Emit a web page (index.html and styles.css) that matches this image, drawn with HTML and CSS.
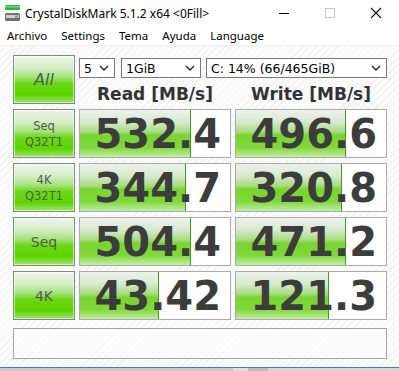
FILE: index.html
```html
<!DOCTYPE html>
<html lang="es">
<head>
  <meta charset="UTF-8" />
  <title>CrystalDiskMark 5.1.2 x64 &lt;0Fill&gt;</title>
  <link rel="stylesheet" href="styles.css">
</head>
<body>

  <div class="window">
    <div class="titlebar">
      <svg class="app-icon" width="16" height="17" viewBox="0 0 16 17">
        <rect x="0" y="0" width="15" height="5" rx="1" fill="#2fb34a"/>
        <rect x="0" y="1" width="15" height="1.5" fill="#6fd86f"/>
        <rect x="0" y="8" width="15" height="8" rx="1.5" fill="#6f6f6f"/>
        <rect x="1" y="10" width="13" height="3" fill="#cfcfcf"/>
        <rect x="10" y="10.5" width="3" height="2" fill="#3cc43c"/>
      </svg>
      <span class="title">CrystalDiskMark 5.1.2 x64 &lt;0Fill&gt;</span>
      <div class="controls">
        <svg class="ctl" width="46" height="26" viewBox="0 0 46 26"><line x1="18" y1="13.5" x2="28" y2="13.5" stroke="#000" stroke-width="1"/></svg>
        <svg class="ctl" width="46" height="26" viewBox="0 0 46 26"><rect x="18.5" y="8.5" width="9" height="9" fill="none" stroke="#c6c6c6" stroke-width="1"/></svg>
        <svg class="ctl" width="46" height="26" viewBox="0 0 46 26"><path d="M18 8 L28 18 M28 8 L18 18" stroke="#111" stroke-width="1.1"/></svg>
      </div>
    </div>

    <div class="menubar">
      <span>Archivo</span>
      <span>Settings</span>
      <span>Tema</span>
      <span>Ayuda</span>
      <span>Language</span>
    </div>

    <div class="client">
      <div class="grid">
        <div class="btn all">All</div>

        <div class="selects">
          <div class="select sel-count">5<svg class="chev" width="10" height="6" viewBox="0 0 10 6"><path d="M1 1 L5 5 L9 1" fill="none" stroke="#222" stroke-width="1.4"/></svg></div>
          <div class="select sel-size">1GiB<svg class="chev" width="10" height="6" viewBox="0 0 10 6"><path d="M1 1 L5 5 L9 1" fill="none" stroke="#222" stroke-width="1.4"/></svg></div>
          <div class="select sel-drive">C: 14% (66/465GiB)<svg class="chev" width="10" height="6" viewBox="0 0 10 6"><path d="M1 1 L5 5 L9 1" fill="none" stroke="#222" stroke-width="1.4"/></svg></div>
        </div>

        <div class="head">Read [MB/s]</div>
        <div class="head">Write [MB/s]</div>

        <div class="btn label">Seq<br>Q32T1</div>
        <div class="value"><div class="bar" style="width: 111px"></div><span>532.4</span></div>
        <div class="value"><div class="bar" style="width: 110px"></div><span>496.6</span></div>

        <div class="btn label">4K<br>Q32T1</div>
        <div class="value"><div class="bar" style="width: 106px"></div><span>344.7</span></div>
        <div class="value"><div class="bar" style="width: 106px"></div><span>320.8</span></div>

        <div class="btn label big">Seq</div>
        <div class="value"><div class="bar" style="width: 111px"></div><span>504.4</span></div>
        <div class="value"><div class="bar" style="width: 110px"></div><span>471.2</span></div>

        <div class="btn label big">4K</div>
        <div class="value"><div class="bar" style="width: 79px"></div><span>43.42</span></div>
        <div class="value"><div class="bar" style="width: 93px"></div><span>121.3</span></div>
      </div>

      <div class="comment"></div>
    </div>

    <div class="taskbar"></div>
  </div>

</body>
</html>
```

FILE: styles.css
```css
* {
  margin: 0;
  padding: 0;
  box-sizing: border-box;
}

body {
  font-family: 'Noto Sans', 'Open Sans', sans-serif;
  background: #fff;
  width: 399px;
  height: 371px;
  overflow: hidden;
}

.window {
  width: 399px;
  height: 371px;
  display: flex;
  flex-direction: column;
}

.titlebar {
  height: 26px;
  display: flex;
  align-items: center;
  background: #fff;
  padding-left: 5px;
}

.app-icon {
  margin-top: 1px;
}

.title {
  margin-left: 4px;
  font-size: 12px;
  color: #000;
}

.controls {
  margin-left: auto;
  display: flex;
}

.ctl {
  display: block;
}

.menubar {
  height: 20px;
  display: flex;
  align-items: center;
  background: #fff;
  font-size: 11.5px;
  color: #000;
  border-bottom: 1px solid #f0f0f0;
}

.menubar span {
  padding: 0 7px;
}

.client {
  height: 321px;
  padding: 9px 0 0 13px;
  background: repeating-linear-gradient(135deg, #fbfbfb 0 4px, #f0f0f0 4px 5px);
}

.grid {
  display: grid;
  grid-template-columns: 62px 152px 152px;
  grid-template-rows: 23px 21px repeat(4, 49px);
  column-gap: 4px;
  row-gap: 5px;
}

.btn {
  display: flex;
  align-items: center;
  justify-content: center;
  text-align: center;
  border: 1px solid #7f8c7c;
  box-shadow: inset 0 0 0 1px rgba(255, 255, 255, 0.55);
  background: linear-gradient(#eef5ea 0%, #d6eec8 25%, #a6e27c 45%, #6bd816 58%, #5dd400 82%, #9fe46e 100%);
  color: #505b4b;
  font-family: 'DejaVu Sans', Verdana, sans-serif;
}

.all {
  grid-row: 1 / 3;
  font-size: 16px;
  font-style: italic;
}

.label {
  font-size: 11.5px;
  line-height: 16px;
}

.label.big {
  font-size: 14px;
}

.selects {
  grid-column: 2 / 4;
  display: flex;
  align-items: flex-end;
}

.select {
  height: 20px;
  display: flex;
  align-items: center;
  padding-left: 4px;
  padding-right: 5px;
  background: #fff;
  border: 1px solid #7a7a7a;
  font-family: 'DejaVu Sans', Verdana, sans-serif;
  font-size: 12.5px;
  color: #000;
}

.chev {
  margin-left: auto;
}

.sel-count {
  width: 36px;
}

.sel-size {
  width: 80px;
  margin-left: 6px;
}

.sel-drive {
  width: 181px;
  margin-left: 5px;
}

.head {
  display: flex;
  align-items: center;
  justify-content: center;
  font-family: 'DejaVu Sans', Verdana, sans-serif;
  font-weight: bold;
  font-size: 17px;
  color: #333;
}

.value {
  position: relative;
  display: flex;
  align-items: center;
  justify-content: flex-end;
  padding-right: 9px;
  background: #fff;
  border: 1px solid #ababab;
  font-family: 'DejaVu Sans', Verdana, sans-serif;
  font-weight: bold;
  font-size: 40px;
  color: #3c3c3c;
  overflow: hidden;
}

.bar {
  position: absolute;
  left: 0;
  top: 0;
  bottom: 0;
  border-right: 1px solid #3f9a26;
  background: linear-gradient(#eef2ec 0%, #d8ead0 25%, #a8dd82 46%, #78d52e 54%, #80d83c 80%, #c4eea4 100%);
}

.value span {
  position: relative;
  line-height: 1;
}

.comment {
  margin-top: 8px;
  width: 374px;
  height: 31px;
  border: 1px solid #a3a3a3;
  background: rgba(255, 255, 255, 0.5);
}

.taskbar {
  height: 4px;
  border-top: 1px solid #3a7fc8;
  background: linear-gradient(90deg, #c9c9c9 0 233px, #e0e0e0 233px 248px, #bdbdbd 248px 268px, #d6d6d6 268px);
}
```
